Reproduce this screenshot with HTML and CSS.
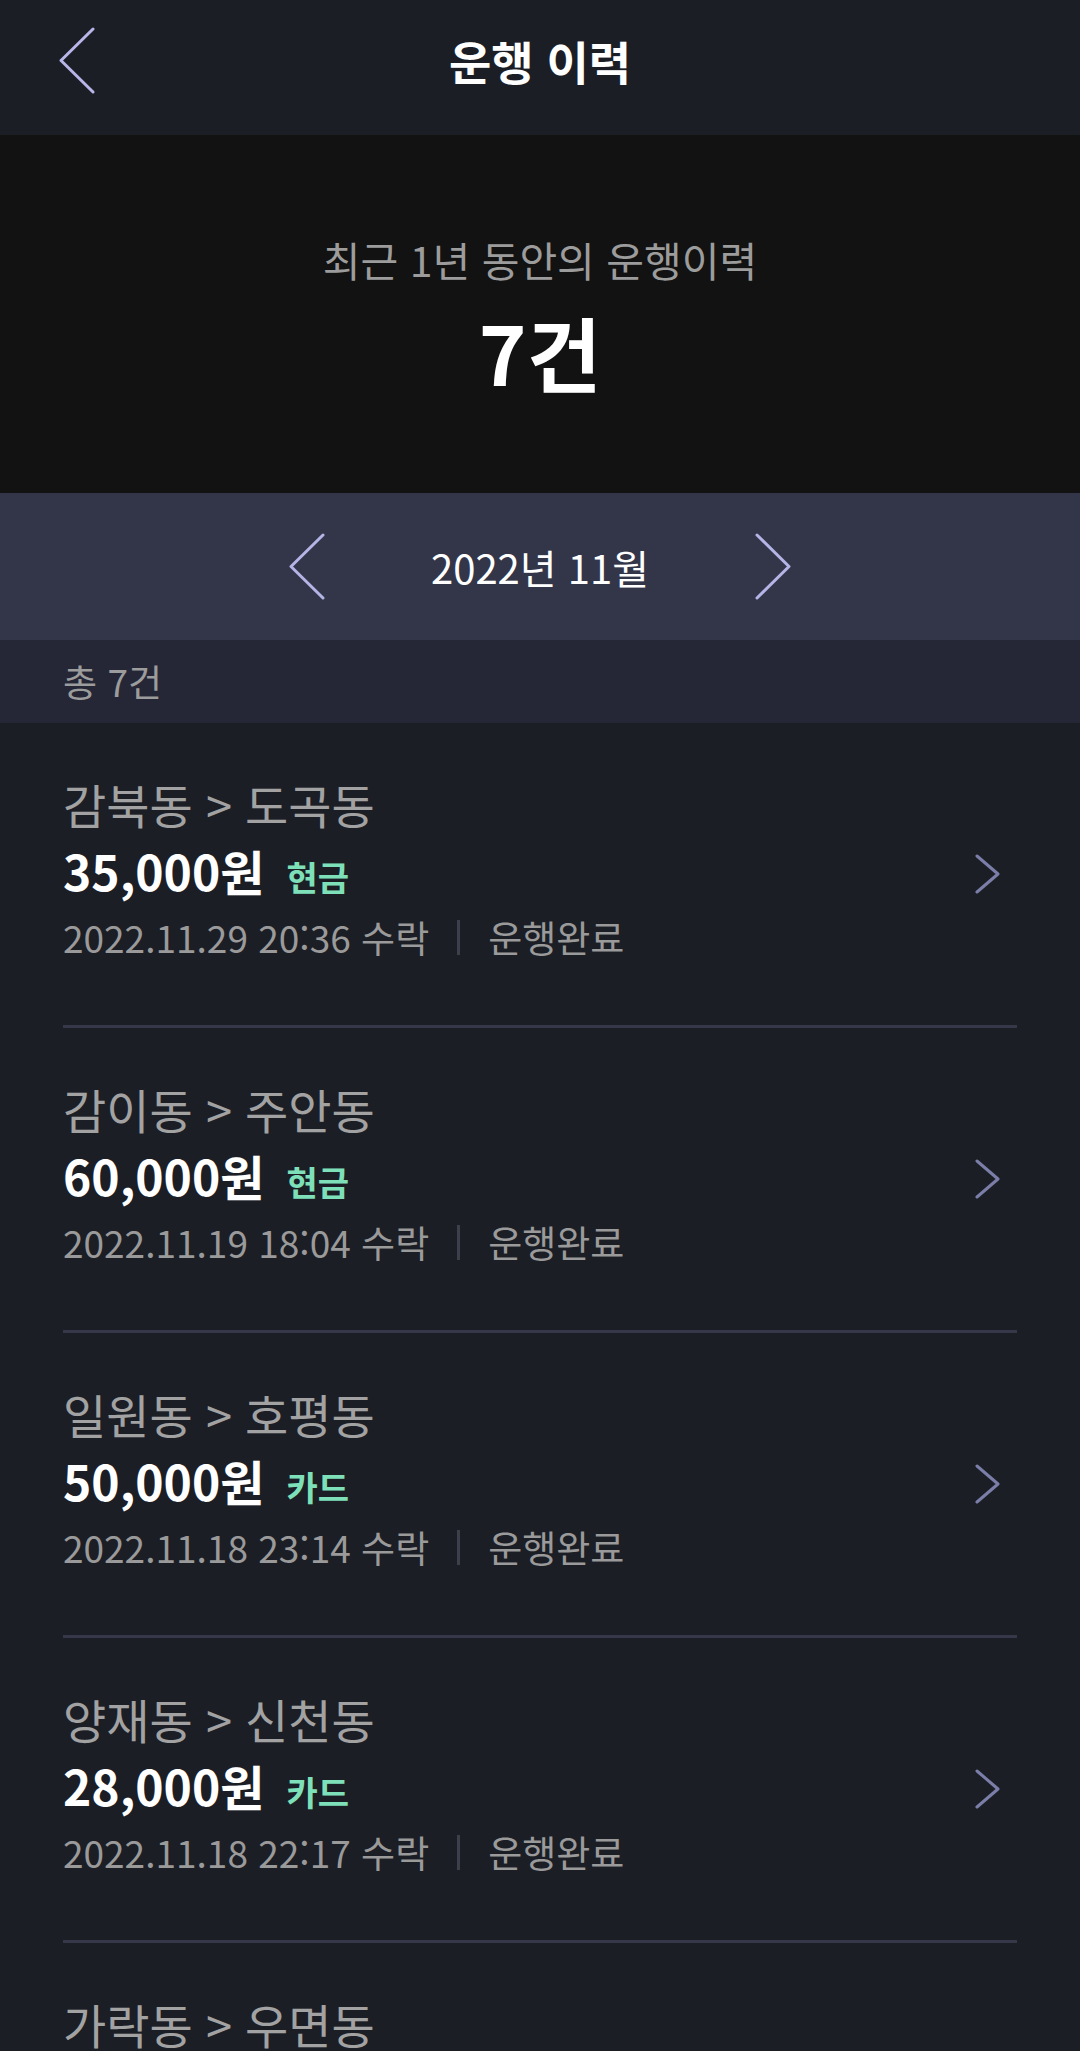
FILE: index.html
```html
<!DOCTYPE html>
<html lang="ko">
<head>
<meta charset="utf-8">
<title>운행 이력</title>
<link rel="stylesheet" href="styles.css">
</head>
<body>
<div class="app">
  <header class="topbar">
    <div class="topbar-side">
      <svg class="back" width="36" height="67" viewBox="0 0 36 67"><polyline points="34,2 2,33.5 34,65" fill="none" stroke="#b8b6e8" stroke-width="3" stroke-linecap="round" stroke-linejoin="round"/></svg>
    </div>
    <h1 class="title">운행 이력</h1>
    <div class="topbar-side"></div>
  </header>

  <section class="hero">
    <p class="hero-sub">최근 1년 동안의 운행이력</p>
    <p class="hero-count">7건</p>
  </section>

  <nav class="month-bar">
    <svg width="36" height="67" viewBox="0 0 36 67"><polyline points="34,2 2,33.5 34,65" fill="none" stroke="#b5b4e6" stroke-width="3" stroke-linecap="round" stroke-linejoin="round"/></svg>
    <span class="month">2022년 11월</span>
    <svg width="36" height="67" viewBox="0 0 36 67"><polyline points="2,2 34,33.5 2,65" fill="none" stroke="#b5b4e6" stroke-width="3" stroke-linecap="round" stroke-linejoin="round"/></svg>
  </nav>

  <div class="count-bar">총 7건</div>

  <ul class="list">
    <li class="item">
      <div class="item-body">
        <div class="route">감북동 &gt; 도곡동</div>
        <div class="price-row"><span class="price">35,000원</span><span class="pay">현금</span></div>
        <div class="meta"><span>2022.11.29 20:36 수락</span><span class="sep"></span><span>운행완료</span></div>
      </div>
      <svg class="go" width="25" height="40" viewBox="0 0 25 40"><polyline points="2,2 23,20 2,38" fill="none" stroke="#7b7ea8" stroke-width="3" stroke-linecap="round" stroke-linejoin="round"/></svg>
    </li>
    <li class="item">
      <div class="item-body">
        <div class="route">감이동 &gt; 주안동</div>
        <div class="price-row"><span class="price">60,000원</span><span class="pay">현금</span></div>
        <div class="meta"><span>2022.11.19 18:04 수락</span><span class="sep"></span><span>운행완료</span></div>
      </div>
      <svg class="go" width="25" height="40" viewBox="0 0 25 40"><polyline points="2,2 23,20 2,38" fill="none" stroke="#7b7ea8" stroke-width="3" stroke-linecap="round" stroke-linejoin="round"/></svg>
    </li>
    <li class="item">
      <div class="item-body">
        <div class="route">일원동 &gt; 호평동</div>
        <div class="price-row"><span class="price">50,000원</span><span class="pay">카드</span></div>
        <div class="meta"><span>2022.11.18 23:14 수락</span><span class="sep"></span><span>운행완료</span></div>
      </div>
      <svg class="go" width="25" height="40" viewBox="0 0 25 40"><polyline points="2,2 23,20 2,38" fill="none" stroke="#7b7ea8" stroke-width="3" stroke-linecap="round" stroke-linejoin="round"/></svg>
    </li>
    <li class="item">
      <div class="item-body">
        <div class="route">양재동 &gt; 신천동</div>
        <div class="price-row"><span class="price">28,000원</span><span class="pay">카드</span></div>
        <div class="meta"><span>2022.11.18 22:17 수락</span><span class="sep"></span><span>운행완료</span></div>
      </div>
      <svg class="go" width="25" height="40" viewBox="0 0 25 40"><polyline points="2,2 23,20 2,38" fill="none" stroke="#7b7ea8" stroke-width="3" stroke-linecap="round" stroke-linejoin="round"/></svg>
    </li>
    <li class="item">
      <div class="item-body">
        <div class="route">가락동 &gt; 우면동</div>
      </div>
    </li>
  </ul>
</div>
</body>
</html>
```

FILE: styles.css
```css
* { box-sizing: border-box; }
html, body {
  margin: 0;
  padding: 0;
  background: #1c1e26;
}
body {
  font-family: "Noto Sans CJK KR", "Noto Sans", sans-serif;
  color: #fff;
  overflow: hidden;
  height: 2051px;
}
p, h1, ul { margin: 0; padding: 0; }
ul { list-style: none; }

.topbar {
  height: 135px;
  background: #1c1e26;
  display: grid;
  grid-template-columns: 1fr auto 1fr;
  align-items: center;
  padding: 0 59px 15px;
}
.topbar-side { display: flex; align-items: center; }
.back { display: block; }
.title {
  font-size: 46px;
  font-weight: 700;
  line-height: 1;
  color: #fff;
}

.hero {
  height: 358px;
  background: #121212;
  display: flex;
  flex-direction: column;
  align-items: center;
  padding-top: 104px;
}
.hero-sub {
  font-size: 41px;
  line-height: 1;
  color: #9c9c9c;
}
.hero-count {
  margin-top: 30px;
  font-size: 81px;
  font-weight: 700;
  line-height: 1;
  color: #fff;
}

.month-bar {
  height: 147px;
  background: #333649;
  display: flex;
  align-items: center;
  justify-content: center;
  gap: 106px;
}
.month-bar svg { display: block; }
.month {
  font-size: 40px;
  line-height: 1;
  color: #fff;
}

.count-bar {
  height: 83px;
  background: #252736;
  display: flex;
  align-items: center;
  padding-left: 63px;
  font-size: 37px;
  line-height: 1;
  color: #9c9c9c;
}

.list {
  background: #1c1e26;
  padding: 0 63px;
}
.item {
  height: 305px;
  border-bottom: 3px solid #363849;
  display: flex;
  align-items: center;
  justify-content: space-between;
  padding-right: 17px;
}
.item-body {
  display: flex;
  flex-direction: column;
  align-self: flex-start;
  padding-top: 57px;
}
.route {
  font-size: 47px;
  line-height: 1;
  color: #a2a2a2;
}
.price-row {
  margin-top: 19px;
  display: flex;
  align-items: baseline;
}
.price {
  font-size: 48px;
  font-weight: 700;
  line-height: 1;
  color: #fff;
}
.pay {
  margin-left: 22px;
  font-size: 34px;
  font-weight: 700;
  line-height: 1;
  color: #7ee0b8;
}
.meta {
  margin-top: 25px;
  display: flex;
  align-items: center;
  font-size: 37px;
  line-height: 1;
  color: #9a9a9a;
}
.sep {
  width: 3px;
  height: 35px;
  background: #3d3f4b;
  margin: 0 28px;
}
.go { display: block; }
```
